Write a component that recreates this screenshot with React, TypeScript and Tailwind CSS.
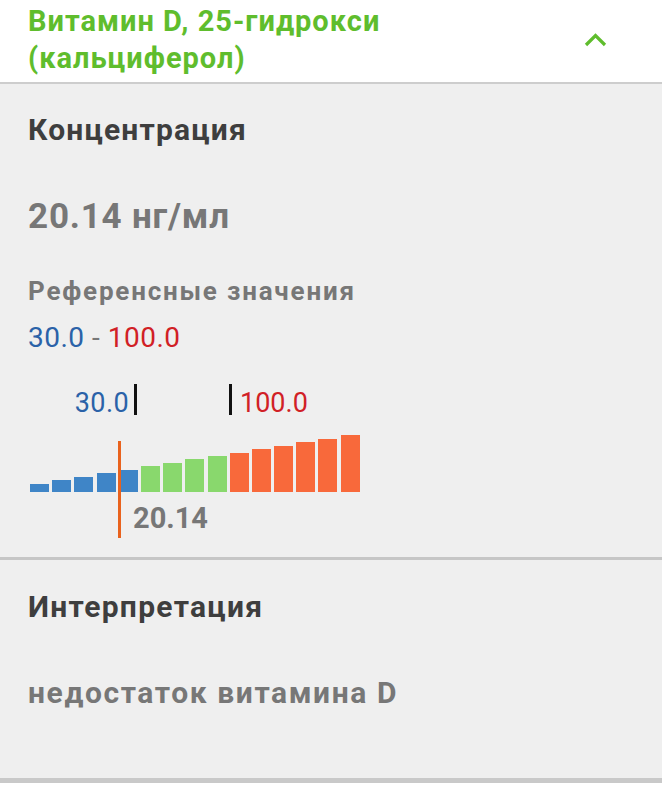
const bars = Array.from({ length: 15 }, (_, i) => ({
  h: 8.3 + 3.46 * i,
  color: i < 5 ? 'bg-[#3f85c7]' : i < 9 ? 'bg-[#89d86d]' : 'bg-[#f8693b]',
}));

const Chevron = () => (
  <svg width="29" height="18" viewBox="0 0 29 18" className="mt-[28px] self-start">
    <polyline
      points="5,14 14.5,4.5 24,14"
      fill="none"
      stroke="#5fbd2d"
      strokeWidth="3.2"
    />
  </svg>
);

const RangeChart = () => (
  <div className="relative ml-[30px] w-[330px]">
    {/* threshold labels + ticks */}
    <div className="flex h-[31px] items-start">
      <div className="flex w-[104px] justify-end pr-[5px]">
        <span className="mt-[6px] text-[27px] leading-none tracking-[0.4px] text-[#2a62a8]">30.0</span>
      </div>
      <div className="h-[31px] w-[3px] bg-[#111]" />
      <div className="ml-[92px] h-[31px] w-[3px] bg-[#111]" />
      <span className="mt-[6px] ml-[8px] text-[27px] leading-none text-[#d11f26]">100.0</span>
    </div>

    {/* bars */}
    <div className="mt-[20px] flex h-[57px] items-end gap-[3.2px]">
      {bars.map((b, i) => (
        <div key={i} className={`w-[19px] ${b.color}`} style={{ height: b.h }} />
      ))}
    </div>

    {/* current value marker */}
    <div className="absolute top-[57px] left-[88px] h-[97px] w-[3px] bg-[#e9621d]" />
    <div className="mt-[12px] ml-[103px] text-[29px] leading-none font-bold text-[#777]">20.14</div>
  </div>
);

export default function App() {
  return (
    <div className="min-h-[802px] w-[662px] bg-white font-['Roboto',sans-serif]">
      {/* Header */}
      <div className="flex justify-between border-b-2 border-[#cdcdcd] pt-[3px] pr-[52px] pb-[5px] pl-[28px]">
        <h1 className="text-[29px] leading-[37px] font-bold tracking-[1px] text-[#5fbd2d]">
          Витамин D, 25-гидрокси
          <br />
          (кальциферол)
        </h1>
        <Chevron />
      </div>

      {/* Concentration */}
      <div className="border-b-[3px] border-[#c6c6c6] bg-[#efefef] pt-[31px] pb-[24px]">
        <div className="pl-[28px]">
          <h2 className="text-[30px] leading-none font-bold tracking-[1.2px] text-[#3e3e3e]">Концентрация</h2>
          <p className="mt-[54px] text-[35px] leading-none font-bold tracking-[0.8px] text-[#777]">20.14 нг/мл</p>
          <p className="mt-[44px] text-[26px] leading-none font-bold tracking-[1.8px] text-[#777]">Референсные значения</p>
          <p className="mt-[20px] text-[28px] leading-none tracking-[0.5px]">
            <span className="text-[#2a62a8]">30.0</span>
            <span className="text-[#777]"> - </span>
            <span className="text-[#d11f26]">100.0</span>
          </p>
        </div>
        <div className="mt-[32px]">
          <RangeChart />
        </div>
      </div>

      {/* Interpretation */}
      <div className="border-b-[5px] border-[#c9c9c9] bg-[#efefef] pt-[32px] pb-[70px] pl-[28px]">
        <h2 className="text-[30px] leading-none font-bold tracking-[1.3px] text-[#3e3e3e]">Интерпретация</h2>
        <p className="mt-[56px] text-[30px] leading-none font-bold tracking-[1.6px] text-[#777]">недостаток витамина D</p>
      </div>
    </div>
  );
}
